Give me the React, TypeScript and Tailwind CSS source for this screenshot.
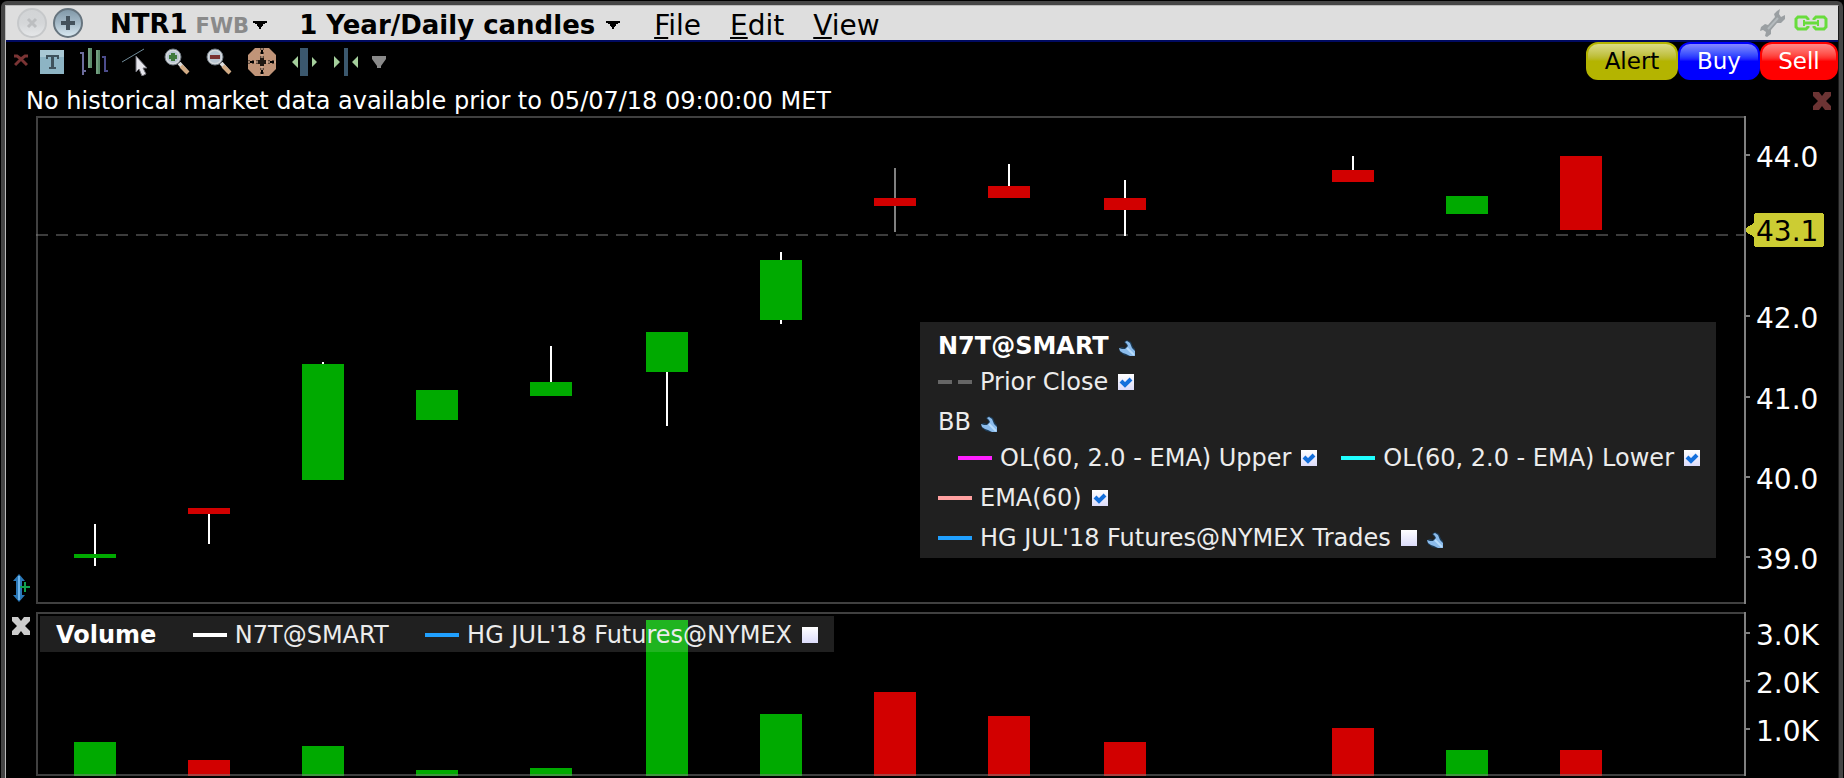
import React from "react";

type Direction = "up" | "down";

interface Candle {
  x: number;
  dir: Direction;
  top: number;
  bottom: number;
  high?: number;
  low?: number;
  volumeTop: number;
  faded?: boolean;
}

// Coordinates are in the plots' own viewBox units
const CANDLES: Candle[] = [
  { x: 38, dir: "up", top: 438, bottom: 442, high: 408, low: 450, volumeTop: 130 },
  { x: 152, dir: "down", top: 392, bottom: 398, low: 428, volumeTop: 148 },
  { x: 266, dir: "up", top: 248, bottom: 364, high: 246, volumeTop: 134 },
  { x: 380, dir: "up", top: 274, bottom: 304, volumeTop: 158 },
  { x: 494, dir: "up", top: 266, bottom: 280, high: 230, volumeTop: 156 },
  { x: 610, dir: "up", top: 216, bottom: 256, low: 310, volumeTop: 8 },
  { x: 724, dir: "up", top: 144, bottom: 204, high: 136, low: 208, volumeTop: 102 },
  { x: 838, dir: "down", top: 82, bottom: 90, high: 52, low: 116, volumeTop: 80, faded: true },
  { x: 952, dir: "down", top: 70, bottom: 82, high: 48, volumeTop: 104 },
  { x: 1068, dir: "down", top: 82, bottom: 94, high: 64, low: 120, volumeTop: 130 },
  { x: 1296, dir: "down", top: 54, bottom: 66, high: 40, volumeTop: 116 },
  { x: 1410, dir: "up", top: 80, bottom: 98, volumeTop: 138 },
  { x: 1524, dir: "down", top: 40, bottom: 114, volumeTop: 138 }
];

const PRICE_TICKS = [
  { label: "44.0", y: 39 },
  { label: "42.0", y: 200 },
  { label: "41.0", y: 281 },
  { label: "40.0", y: 361 },
  { label: "39.0", y: 441 }
];

const VOLUME_TICKS = [
  { label: "3.0K", y: 21 },
  { label: "2.0K", y: 69 },
  { label: "1.0K", y: 117 }
];

const candleColor = (dir: Direction) => (dir === "up" ? "#00aa00" : "#d20000");

function Caret({ className = "" }: { className?: string }) {
  return (
    <svg
      className={`pointer-events-none h-2 w-3.5 shrink-0 ${className}`}
      viewBox="0 0 14 8"
      fill="currentColor"
      aria-hidden="true">
      <path d="M0 0h14v2h-2v1h-2v2H9v1H8v2H6V6H5V5H4V3H2V2H0z" />
    </svg>
  );
}

function RoundButton({ label, faded }: { label: string; faded?: boolean }) {
  return (
    <button type="button" aria-label={label} className="shrink-0">
      <svg width="30" height="30" viewBox="0 0 30 30">
        <defs>
          <linearGradient id={faded ? "ball-off" : "ball-on"} x1="0" y1="0" x2="0" y2="1">
            <stop offset="0" stopColor={faded ? "#d2d4d6" : "#7f97a6"} />
            <stop offset="0.5" stopColor={faded ? "#d4d6d8" : "#a5bac8"} />
            <stop offset="1" stopColor={faded ? "#e6e8ea" : "#dcecf4"} />
          </linearGradient>
        </defs>
        <circle
          cx="15"
          cy="15"
          r="14"
          fill={faded ? "url(#ball-off)" : "url(#ball-on)"}
          stroke={faded ? "#c6c8ca" : "#66747e"}
          strokeWidth="2"
        />
        {faded ? (
          <path d="M11 11l8 8M19 11l-8 8" stroke="#bcbec0" strokeWidth="3" />
        ) : (
          <path d="M15 8v14M8 15h14" stroke="#44525c" strokeWidth="4" />
        )}
      </svg>
    </button>
  );
}

function TitleBar() {
  return (
    <header className="flex h-9 items-center border-b-2 border-[#000a60] bg-[#dedede] pr-2.5 pl-[11px] text-black">
      <RoundButton label="Close chart" faded />
      <span className="w-1.5" />
      <RoundButton label="Add chart" />
      <button type="button" className="ml-[27px] flex items-baseline pt-1 text-[26px] leading-[30px] font-bold">
        NTR1
        <span className="ml-2 text-[21px] text-[#8a8a8a]">FWB</span>
        <Caret className="ml-1 self-center" />
      </button>
      <label className="ml-8 flex items-center pt-1">
        <select
          aria-label="Chart period"
          className="appearance-none bg-transparent text-[26px] leading-[30px] font-bold">
          <option>1 Year/Daily candles</option>
        </select>
        <Caret className="ml-2.5" />
      </label>
      <nav className="ml-[34px] flex gap-[29px] pt-1.5 text-[28px] leading-[30px]">
        {["File", "Edit", "View"].map((item) => (
          <button key={item} type="button">
            <span className="underline decoration-2 underline-offset-2">{item[0]}</span>
            {item.slice(1)}
          </button>
        ))}
      </nav>
      <div className="ml-auto flex items-center gap-2">
        <button type="button" aria-label="Configure">
          <svg width="26" height="28" viewBox="0 0 26 28">
            <path
              d="M17 2l3-2-1 5 2 3 4-2v4l-4 4h-4l-6 7v4l-4 3-2-1 1-4-3-2-3 1 1-4 4-3 3 1 7-8-1-3z"
              fill="#9a9fa2"
            />
            <path d="M18 9L8 20" stroke="#b4babd" strokeWidth="2" />
          </svg>
        </button>
        <button type="button" aria-label="Link group">
          <svg width="34" height="16" viewBox="0 0 34 16" fill="none" stroke="#68dc3c">
            <path d="M14 5V4l-2-2H4L2 4v8l2 2h8l2-2v-1" strokeWidth="3" />
            <path d="M20 5V4l2-2h8l2 2v8l-2 2h-8l-2-2v-1" strokeWidth="3" />
            <path d="M9 8h16" strokeWidth="3" />
            <path d="M10 5v6M24 5v6" strokeWidth="2" />
          </svg>
        </button>
      </div>
    </header>
  );
}

function Magnifier({ plus }: { plus?: boolean }) {
  return (
    <>
      <path d="M15 15l8 9" stroke="#dcdcdc" strokeWidth="4" />
      <path d="M17 18l7 7" stroke="#d2ab84" strokeWidth="4" />
      <circle cx="9" cy="9" r="7" fill="#b9c6d2" stroke="#d4d8dc" strokeWidth="2" />
      <circle cx="9" cy="9" r="8" fill="none" stroke="#6d7780" strokeWidth="1" />
      <path
        d={plus ? "M9 5v8M5 9h8" : "M4 9h10"}
        stroke={plus ? "#3f7a3c" : "#7a3030"}
        strokeWidth="4"
      />
    </>
  );
}

const TOOLS: { name: string; icon: React.ReactNode }[] = [
  {
    name: "Text",
    icon: (
      <>
        <rect x="2" y="2" width="24" height="24" fill="#8db4c4" />
        <rect x="2" y="2" width="24" height="7" fill="#a9c8d4" />
        <path d="M8 7h13v4h-2V9h-3v10h2v2h-7v-2h2V9h-3v2H8z" fill="#3f525c" />
      </>
    )
  },
  {
    name: "Bars",
    icon: (
      <>
        <path d="M0 5h3v22M3 23h3" stroke="#6c6c9c" strokeWidth="2" fill="none" />
        <path d="M22 9h3v14h3" stroke="#4c4c8c" strokeWidth="2" fill="none" />
        <path d="M10 0v20M18 2v24" stroke="#5c8c6c" strokeWidth="4" />
        <path d="M9 0v20M17 2v24" stroke="#88b094" strokeWidth="1" />
      </>
    )
  },
  {
    name: "Trend line",
    icon: (
      <>
        <path d="M0 14L22 1" stroke="#6f8a98" strokeWidth="1" />
        <path d="M14 8v16l3-3 3 7 4-2-3-6h4z" fill="#e6e6ec" stroke="#707078" strokeWidth="1" />
      </>
    )
  },
  { name: "Zoom in", icon: <Magnifier plus /> },
  { name: "Zoom out", icon: <Magnifier /> },
  {
    name: "Crosshair",
    icon: (
      <>
        <path d="M7 0h14l7 7v14l-7 7H7l-7-7V7z" fill="#c09478" />
        <path d="M13 0v28M0 13h28" stroke="#000" strokeWidth="1" strokeDasharray="2 2" />
        <path d="M15 0v28M0 15h28" stroke="#000" strokeWidth="1" strokeDasharray="2 2" />
        <path d="M14 0v28M0 14h28" stroke="#d8b49c" strokeWidth="1" />
        <path d="M12 10h4v2h2v4h-2v2h-4v-2h-2v-4h2z" fill="#201812" />
        <path d="M14 2v4M14 22v4M2 14h4M22 14h4" stroke="#000" strokeWidth="2" />
      </>
    )
  },
  {
    name: "Widen bars",
    icon: (
      <>
        <rect x="10" y="0" width="8" height="28" fill="#3b586e" />
        <path d="M8 8v12l-6-6zM22 9v10l5-5z" fill="#a5cf9c" />
      </>
    )
  },
  {
    name: "Narrow bars",
    icon: (
      <>
        <rect x="12" y="0" width="4" height="28" fill="#3b586e" />
        <path d="M2 8v12l6-6zM26 8v12l-6-6z" fill="#a5cf9c" />
      </>
    )
  }
];

function Toolbar() {
  return (
    <div className="flex h-[38px] items-start">
      <div className="flex items-center gap-3.5 pt-1.5 pl-2">
        <button type="button" aria-label="Hide toolbar" className="-mr-1">
          <svg width="14" height="20" viewBox="0 0 14 20">
            <path d="M0 4h3l4 3 4-3h3M1 13l6-6 6 6" fill="none" stroke="#7a3434" strokeWidth="3" />
          </svg>
        </button>
        {TOOLS.map(({ name, icon }) => (
          <button key={name} type="button" aria-label={name}>
            <svg width="28" height="28" viewBox="0 0 28 28">
              {icon}
            </svg>
          </button>
        ))}
        <button type="button" aria-label="More tools" className="-ml-0.5">
          <svg width="14" height="12" viewBox="0 0 14 12">
            <path d="M0 0h14v3L9 10v2H5v-2L0 3z" fill="#8a8a8a" />
          </svg>
        </button>
      </div>
      <div className="ml-auto flex text-[23px]">
        <button
          type="button"
          className="h-[38px] w-[92px] rounded-xl border-2 border-[#b4b400] bg-linear-to-b from-[#dcdc84] via-[#b8b81c] via-45% to-[#b4b400] to-50% leading-[34px] text-black">
          Alert
        </button>
        <button
          type="button"
          className="h-[38px] w-[82px] rounded-xl border-2 border-[#0000ff] bg-linear-to-b from-[#8888ff] via-[#2020ff] via-45% to-[#0000ff] to-50% leading-[34px] text-white">
          Buy
        </button>
        <button
          type="button"
          className="h-[38px] w-[78px] rounded-xl border-2 border-[#ff0000] bg-linear-to-b from-[#ff8888] via-[#ff2020] via-45% to-[#ff0000] to-50% leading-[34px] text-white">
          Sell
        </button>
      </div>
    </div>
  );
}

function Cross({ color }: { color: string }) {
  return (
    <svg width="20" height="20" viewBox="0 0 20 20">
      <path
        d="M1 1h6l3 4 3-4h6v4l-5 5 5 5v4h-6l-3-4-3 4H1v-4l5-5-5-5z"
        fill={color}
      />
    </svg>
  );
}

function WrenchButton({ label }: { label: string }) {
  return (
    <button type="button" aria-label={label} className="ml-2.5 pt-1">
      <svg width="16" height="16" viewBox="0 0 16 16">
        <path d="M5 2l3-2 4 2 2 5 2 2v7H9l-4-1-4-3-1-4 3-1 3 1 2-2z" fill="#1c3c58" />
        <path d="M6 2l2-1 3 2 2 5 3 3v5h-5l-4-2-3-1-3-2-1-3 3 1h3l3-3-1-2z" fill="#8cbcec" />
        <path d="M8 8l7 7" stroke="#b8dcfc" strokeWidth="2" />
      </svg>
    </button>
  );
}

interface SeriesProps {
  name: string;
  color: string;
  dashed?: boolean;
  checked?: boolean;
  toggle?: boolean;
  className?: string;
}

function Series({ name, color, dashed, checked, toggle = true, className = "" }: SeriesProps) {
  return (
    <label className={`flex items-center ${className}`}>
      <svg className="mr-2 shrink-0" width="34" height="4" viewBox="0 0 34 4" aria-hidden="true">
        <path d={dashed ? "M0 2h14M20 2h14" : "M0 2h34"} stroke={color} strokeWidth="4" />
      </svg>
      {name}
      {toggle && (
        <span className="relative ml-2.5 h-4 w-4 shrink-0">
          <input
            type="checkbox"
            defaultChecked={checked}
            className="peer block h-4 w-4 appearance-none bg-linear-to-b from-white to-[#dcdcfa]"
          />
          <svg
            className="pointer-events-none absolute inset-0 hidden peer-checked:block"
            width="16"
            height="16"
            viewBox="0 0 16 16"
            aria-hidden="true">
            <path d="M3 7l4 4 6-6" fill="none" stroke="#1470dc" strokeWidth="4" />
          </svg>
        </span>
      )}
    </label>
  );
}

function PriceLegend() {
  return (
    <div className="absolute top-[206px] right-[30px] w-[796px] bg-white/[0.125] pt-1.5 pb-0.5 pl-[18px] text-[24px] leading-9 whitespace-nowrap text-[#ececec]">
      <div className="flex h-9 items-center font-bold text-white">
        N7T@SMART
        <WrenchButton label="Configure N7T@SMART" />
      </div>
      <div className="flex h-9 items-center">
        <Series name="Prior Close" color="#666666" dashed checked />
      </div>
      <div className="mt-1 flex h-9 items-center">
        BB
        <WrenchButton label="Configure BB" />
      </div>
      <div className="flex h-9 items-center justify-between pr-4 pl-5">
        <Series name="OL(60, 2.0 - EMA) Upper" color="#ff20ff" checked />
        <Series name="OL(60, 2.0 - EMA) Lower" color="#20ffff" checked />
      </div>
      <div className="mt-1 flex h-9 items-center">
        <Series name="EMA(60)" color="#ffa0a0" checked />
      </div>
      <div className="mt-1 flex h-9 items-center">
        <Series name="HG JUL'18 Futures@NYMEX Trades" color="#20a0ff" />
        <WrenchButton label="Configure HG JUL'18" />
      </div>
    </div>
  );
}

function Frame({ width, height }: { width: number; height: number }) {
  return (
    <>
      <path
        d={`M${width - 2} 1H1V${height - 1}H${width - 2}`}
        fill="none"
        stroke="#808080"
        strokeOpacity="0.5"
        strokeWidth="2"
      />
      <path d={`M${width - 1} 0V${height}`} stroke="#808080" strokeWidth="2" />
    </>
  );
}

function PricePlot() {
  return (
    <svg
      className="block h-[488px] w-full"
      viewBox="0 0 1710 488"
      preserveAspectRatio="none"
      shapeRendering="crispEdges"
      role="img"
      aria-label="Daily candles">
      <path d="M0 119H1708" stroke="#3c3c3c" strokeWidth="2" strokeDasharray="12 8" />
      {CANDLES.map((c) => (
        <g key={c.x}>
          <rect
            x={c.x + 20}
            y={c.high ?? c.top}
            width="2"
            height={(c.low ?? c.bottom) - (c.high ?? c.top)}
            fill={c.faded ? "#808080" : "#ffffff"}
          />
          <rect x={c.x} y={c.top} width="42" height={c.bottom - c.top} fill={candleColor(c.dir)} />
        </g>
      ))}
      <Frame width={1710} height={488} />
    </svg>
  );
}

function VolumePlot() {
  return (
    <svg
      className="block h-[164px] w-full"
      viewBox="0 0 1710 164"
      preserveAspectRatio="none"
      shapeRendering="crispEdges"
      role="img"
      aria-label="Daily volume">
      {CANDLES.map((c) => (
        <rect
          key={c.x}
          x={c.x}
          y={c.volumeTop}
          width="42"
          height={164 - c.volumeTop}
          fill={candleColor(c.dir)}
        />
      ))}
      <Frame width={1710} height={164} />
    </svg>
  );
}

interface AxisProps {
  ticks: { label: string; y: number }[];
  height: number;
  children?: React.ReactNode;
}

function Axis({ ticks, height, children }: AxisProps) {
  return (
    <svg
      className="block shrink-0 overflow-visible text-[28px]"
      width="92"
      height={height}
      viewBox={`0 0 92 ${height}`}
      shapeRendering="crispEdges">
      {ticks.map(({ label, y }) => (
        <g key={label}>
          <path d={`M0 ${y}h4`} stroke="#808080" strokeWidth="2" />
          <text x="10" y={y + 12} fill="#ffffff">
            {label}
          </text>
        </g>
      ))}
      {children}
    </svg>
  );
}

export default function App() {
  return (
    <div className="bg-black px-px pt-px font-['DejaVu_Sans',Verdana,sans-serif] text-white">
      <div className="rounded-t-md border-4 border-b-0 border-[#454545]">
        <div className="border-t border-r border-l border-t-[#b8b8b8] border-r-[#1c1c1c] border-l-[#b8b8b8] bg-black pb-0.5">
          <TitleBar />
          <Toolbar />
          <div className="flex h-9 items-center justify-between pt-1.5 pr-1.5 pl-5">
            <p className="text-[24px] leading-[30px]">
              No historical market data available prior to 05/07/18 09:00:00 MET
            </p>
            <button type="button" aria-label="Dismiss message">
              <Cross color="#6c3434" />
            </button>
          </div>
          <main className="flex flex-col gap-2">
            <section className="flex">
              <div className="flex w-[30px] shrink-0 items-end pb-0.5 pl-1.5">
                <button type="button" aria-label="Scale price axis">
                  <svg width="20" height="28" viewBox="0 0 20 28">
                    <path d="M7 0l6 7h-3v14h3l-6 7-6-7h3V7H1z" fill="#2a78b8" />
                    <path d="M7 2v24" stroke="#6cb4ec" strokeWidth="2" />
                    <path d="M13 8v10M8 13h10" stroke="#10a050" strokeWidth="2" />
                  </svg>
                </button>
              </div>
              <div className="relative min-w-0 flex-1">
                <PricePlot />
                <PriceLegend />
              </div>
              <Axis ticks={PRICE_TICKS} height={488}>
                <path
                  d="M-3 114l11-7v-7q0-3 3-3h64q3 0 3 3v28q0 3-3 3H11q-3 0-3-3v-7z"
                  fill="#cccc33"
                />
                <text x="10" y="125" fill="#000000">
                  43.1
                </text>
              </Axis>
            </section>
            <section className="flex">
              <div className="flex w-[30px] shrink-0 items-start pt-1 pl-[5px]">
                <button type="button" aria-label="Remove volume">
                  <Cross color="#cccccc" />
                </button>
              </div>
              <div className="relative min-w-0 flex-1">
                <VolumePlot />
                <div className="absolute top-1 left-1 flex h-9 w-[794px] items-center justify-between bg-white/[0.125] px-4 pt-0.5 text-[24px] leading-[34px] whitespace-nowrap text-[#ececec]">
                  <h2 className="font-bold text-white">Volume</h2>
                  <Series name="N7T@SMART" color="#ffffff" toggle={false} />
                  <Series name="HG JUL'18 Futures@NYMEX" color="#20a0ff" />
                </div>
              </div>
              <Axis ticks={VOLUME_TICKS} height={164} />
            </section>
          </main>
        </div>
      </div>
    </div>
  );
}
